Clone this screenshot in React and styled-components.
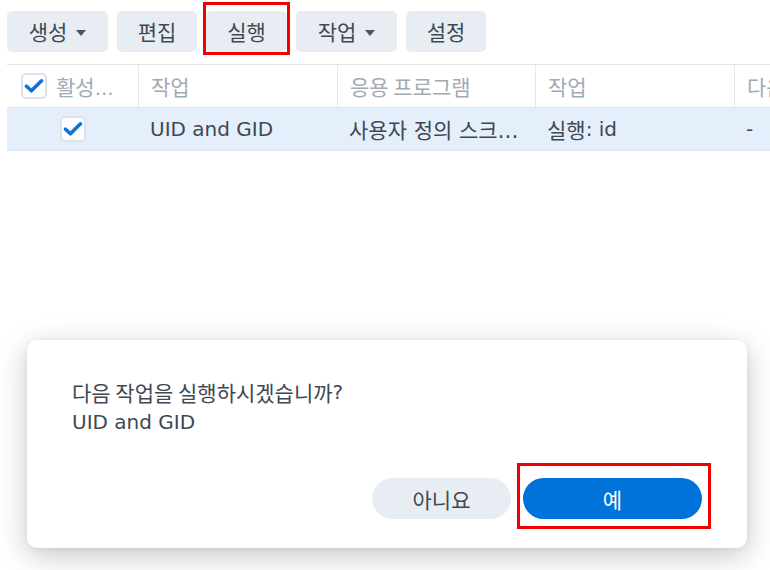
import React from 'react';
import styled, { createGlobalStyle } from 'styled-components';

const Global = createGlobalStyle`
  html, body { margin: 0; padding: 0; background: #ffffff; }
  body {
    font-family: "DejaVu Sans", "Noto Sans CJK KR", sans-serif;
    font-size: 20px;
    color: #3e4752;
  }
`;

const Ko = styled.span`
  font-family: "Noto Sans CJK KR", sans-serif;
  font-size: 21px;
`;

const Page = styled.div`
  position: relative;
  width: 770px;
  height: 570px;
  overflow: hidden;
  background: #ffffff;
`;

const Toolbar = styled.div`
  display: flex;
  gap: 9px;
  padding: 11px 0 12px 7px;
`;

const ToolButton = styled.div`
  position: relative;
  box-sizing: border-box;
  width: ${p => p.$w}px;
  height: 41px;
  border-radius: 5px;
  background: #e8edf3;
  color: #3f4853;
  display: flex;
  align-items: center;
  justify-content: center;
  gap: 9px;
  font-size: 20px;
  line-height: 1;
`;

const Marker = styled.span`
  position: absolute;
  top: ${p => p.$t}px;
  bottom: ${p => p.$b}px;
  left: ${p => p.$l}px;
  right: ${p => p.$r}px;
  border: 3px solid #f20000;
  pointer-events: none;
`;

const Caret = () => (
  <svg width="10" height="6" viewBox="0 0 10 6" style={{ marginTop: 2 }}>
    <path d="M0 0 L10 0 L5 6 Z" fill="#4a525c" />
  </svg>
);

const Grid = styled.div`
  margin-left: 7px;
  width: 900px;
`;

const Row = styled.div`
  display: grid;
  grid-template-columns: 131px 199px 198px 199px 199px;
  height: ${p => p.$h}px;
  background: ${p => (p.$selected ? '#e4effb' : '#ffffff')};
  border-top: ${p => (p.$top ? '1px solid #dce3eb' : 'none')};
  border-bottom: 1px solid #dce3eb;
`;

const HeadCell = styled.div`
  display: flex;
  align-items: center;
  gap: 9px;
  padding-left: ${p => (p.$first ? 14 : 12)}px;
  border-left: ${p => (p.$first ? 'none' : '1px solid #e3e8ee')};
  color: #a2aab4;
  white-space: nowrap;
  overflow: hidden;
`;

const Cell = styled.div`
  display: flex;
  align-items: center;
  justify-content: ${p => (p.$center ? 'center' : 'flex-start')};
  padding: 0 12px;
  color: #3e4752;
  white-space: nowrap;
  overflow: hidden;
  min-width: 0;
`;

const Ellipsis = styled.span`
  font-family: "DejaVu Sans", "Noto Sans CJK KR", sans-serif;
  font-size: 21px;
  overflow: hidden;
  text-overflow: ellipsis;
  white-space: nowrap;
`;

const Box = styled.span`
  box-sizing: border-box;
  width: 26px;
  height: 26px;
  border: 2px solid #dde3ea;
  border-radius: 5px;
  background: #ffffff;
  display: flex;
  align-items: center;
  justify-content: center;
  flex: none;
`;

const Check = () => (
  <Box>
    <svg width="20" height="16" viewBox="0 0 20 16">
      <path d="M2.5 8.2 L7.4 12.8 L17.5 2.8" fill="none" stroke="#0a73dc" strokeWidth="3.6" strokeLinecap="round" strokeLinejoin="round" />
    </svg>
  </Box>
);

const Dialog = styled.div`
  position: absolute;
  left: 27px;
  top: 340px;
  width: 720px;
  height: 208px;
  box-sizing: border-box;
  background: #ffffff;
  border-radius: 10px;
  box-shadow: 0 8px 30px rgba(0, 0, 0, 0.22), 0 1px 6px rgba(0, 0, 0, 0.06);
  padding: 37px 45px 29px 45px;
  display: flex;
  flex-direction: column;
`;

const Message = styled.div`
  color: #3e4752;
  flex: 1;
`;

const Line = styled.div`
  height: 30px;
  display: flex;
  align-items: center;
  white-space: nowrap;
`;

const Actions = styled.div`
  display: flex;
  justify-content: flex-end;
  gap: 12px;
`;

const PillButton = styled.div`
  position: relative;
  box-sizing: border-box;
  width: ${p => p.$w}px;
  height: 41px;
  border-radius: 21px;
  display: flex;
  align-items: center;
  justify-content: center;
  background: ${p => (p.$primary ? '#0073da' : '#e8edf4')};
  color: ${p => (p.$primary ? '#ffffff' : '#3f4853')};
  font-size: 20px;
`;

export default function App() {
  return (
    <Page>
      <Global />
      <Toolbar>
        <ToolButton $w={101}><Ko>생성</Ko> <Caret /></ToolButton>
        <ToolButton $w={80}><Ko>편집</Ko></ToolButton>
        <ToolButton $w={81}>
          <Ko>실행</Ko>
          <Marker $t={-9} $b={-3} $l={-3} $r={-3} />
        </ToolButton>
        <ToolButton $w={101}><Ko>작업</Ko> <Caret /></ToolButton>
        <ToolButton $w={80}><Ko>설정</Ko></ToolButton>
      </Toolbar>
      <Grid>
        <Row $h={42} $top>
          <HeadCell $first><Check /><span><Ko>활성</Ko>...</span></HeadCell>
          <HeadCell><Ko>작업</Ko></HeadCell>
          <HeadCell><Ko>응용 프로그램</Ko></HeadCell>
          <HeadCell><Ko>작업</Ko></HeadCell>
          <HeadCell><Ko>다음 실행 시간</Ko></HeadCell>
        </Row>
        <Row $h={42} $selected>
          <Cell $center><Check /></Cell>
          <Cell>UID and GID</Cell>
          <Cell><Ellipsis>사용자 정의 스크립트</Ellipsis></Cell>
          <Cell><Ko>실행</Ko>: id</Cell>
          <Cell>-</Cell>
        </Row>
      </Grid>
      <Dialog>
        <Message>
          <Line><Ko>다음 작업을 실행하시겠습니까</Ko>?</Line>
          <Line>UID and GID</Line>
        </Message>
        <Actions>
          <PillButton $w={139}><Ko>아니요</Ko></PillButton>
          <PillButton $w={179} $primary>
            <Ko>예</Ko>
            <Marker $t={-15} $b={-10} $l={-6} $r={-9} />
          </PillButton>
        </Actions>
      </Dialog>
    </Page>
  );
}
